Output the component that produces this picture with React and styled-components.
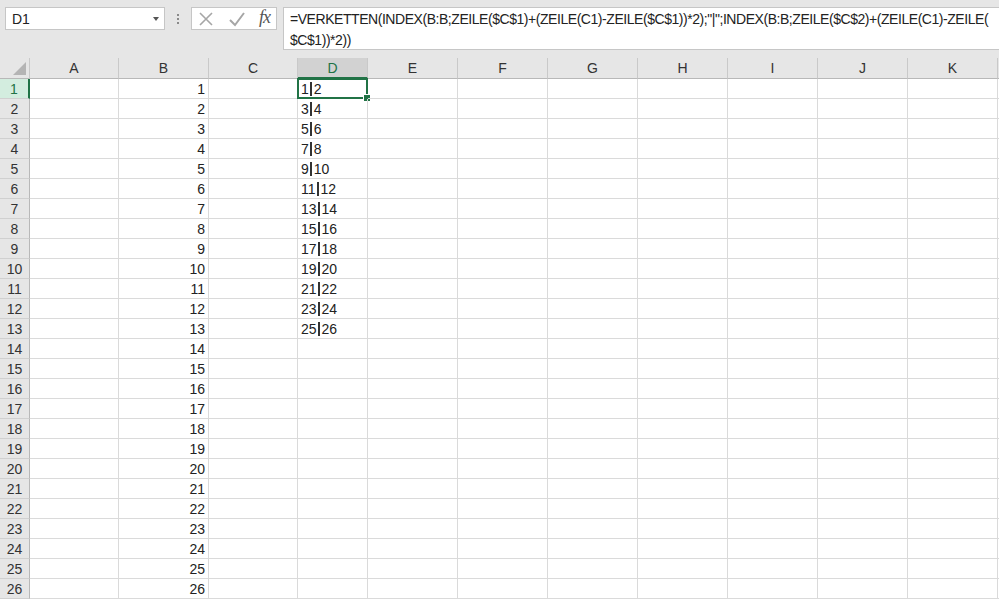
import styled, { createGlobalStyle, css } from "styled-components"

const GlobalStyle = createGlobalStyle`
  html, body {
    margin: 0;
    padding: 0;
    background: #e6e6e6;
    overflow: hidden;
  }
  * { box-sizing: border-box; }
`

const Page = styled.div`
  width: 999px;
  height: 601px;
  display: flex;
  flex-direction: column;
  font-family: "Liberation Sans", Arial, sans-serif;
  background: #e6e6e6;
  overflow: hidden;
`

const FormulaBar = styled.div`
  height: 58px;
  flex-shrink: 0;
  display: flex;
  align-items: flex-start;
  padding: 7px 0 0 5px;
`

const NameBox = styled.div`
  width: 160px;
  height: 23px;
  background: #fff;
  border: 1px solid #c6c6c6;
  display: flex;
  align-items: center;
  justify-content: space-between;
  padding: 0 5px 0 6px;
  font-size: 14px;
  color: #222;
`

const Caret = styled.span`
  width: 0;
  height: 0;
  border-left: 3px solid transparent;
  border-right: 3px solid transparent;
  border-top: 4px solid #555;
`

const Grip = styled.div`
  width: 26px;
  height: 23px;
  display: flex;
  flex-direction: column;
  align-items: center;
  justify-content: center;
  gap: 2px;
  span {
    width: 2px;
    height: 2px;
    background: #8a8a8a;
  }
`

const FxBox = styled.div`
  width: 86px;
  height: 23px;
  background: #fff;
  border: 1px solid #c6c6c6;
  display: flex;
  align-items: center;
  justify-content: space-between;
  padding: 0 6px 0 6px;
`

const Fx = styled.span`
  font-family: "Liberation Serif", "DejaVu Serif", serif;
  font-style: italic;
  font-size: 18px;
  color: #555;
  letter-spacing: -1px;
  margin-top: -3px;
`

const FormulaInput = styled.div`
  margin-left: 6px;
  flex: 1;
  height: 43px;
  background: #fff;
  border: 1px solid #c6c6c6;
  border-right: none;
  padding: 1px 0 0 6px;
  font-size: 14px;
  letter-spacing: -0.45px;
  line-height: 21px;
  color: #222;
  white-space: pre;
  overflow: hidden;
`

const Grid = styled.div`
  display: grid;
  grid-template-columns: 30px 89px 90px 89px 70px repeat(7, 90px) 1fr;
  grid-auto-rows: 20px;
  grid-template-rows: 21px;
  background: #fff;
  font-size: 14px;
  color: #222;
  flex: 1;
`

const ColHead = styled.div`
  background: ${p => (p.$active ? "#d2d2d2" : "#e6e6e6")};
  border-right: 1px solid #c9c9c9;
  border-bottom: ${p => (p.$active ? "2px solid #217346" : "1px solid #b8b8b8")};
  display: flex;
  align-items: center;
  justify-content: center;
  color: ${p => (p.$active ? "#217346" : "#333")};
  font-size: 14px;
`

const Corner = styled.div`
  background: #e6e6e6;
  border-right: 1px solid #c9c9c9;
  border-bottom: 1px solid #b8b8b8;
  position: relative;
  &::after {
    content: "";
    position: absolute;
    right: 3px;
    bottom: 3px;
    width: 0;
    height: 0;
    border-left: 13px solid transparent;
    border-bottom: 13px solid #b4b4b4;
  }
`

const RowHead = styled.div`
  background: ${p => (p.$active ? "#d3eddf" : "#e6e6e6")};
  border-right: ${p => (p.$active ? "2px solid #217346" : "1px solid #b8b8b8")};
  border-bottom: 1px solid #d0d0d0;
  display: flex;
  align-items: center;
  justify-content: center;
  color: ${p => (p.$active ? "#217346" : "#333")};
  font-size: 14px;
`

const Cell = styled.div`
  border-right: 1px solid #dadada;
  border-bottom: 1px solid #dadada;
  display: flex;
  align-items: center;
  padding: 0 3px;
  white-space: nowrap;
  justify-content: ${p => (p.$right ? "flex-end" : "flex-start")};
  position: relative;
  ${p =>
    p.$selected &&
    css`
      &::before {
        content: "";
        position: absolute;
        left: -1px;
        top: -1px;
        right: -1px;
        bottom: -1px;
        border: 2px solid #217346;
      }
      &::after {
        content: "";
        position: absolute;
        right: -4px;
        bottom: -4px;
        width: 6px;
        height: 6px;
        background: #217346;
        border: 1px solid #fff;
      }
    `}
`

const Pipe = styled.span`
  display: inline-block;
  width: 2px;
  height: 14px;
  background: #333;
  margin: 0 2px 0 1px;
`

const columns = ["A", "B", "C", "D", "E", "F", "G", "H", "I", "J", "K"]
const rows = Array.from({ length: 26 }, (_, i) => i + 1)

const formula =
  '=VERKETTEN(INDEX(B:B;ZEILE($C$1)+(ZEILE(C1)-ZEILE($C$1))*2);"|";INDEX(B:B;ZEILE($C$2)+(ZEILE(C1)-ZEILE(\n$C$1))*2))'

const CrossIcon = () => (
  <svg width="16" height="16" viewBox="0 0 16 16">
    <path d="M2 2 L14 14 M14 2 L2 14" stroke="#a6a6a6" strokeWidth="1.6" fill="none" />
  </svg>
)

const CheckIcon = () => (
  <svg width="18" height="16" viewBox="0 0 18 16">
    <path d="M2 9 L7 14 L16 2" stroke="#a6a6a6" strokeWidth="2" fill="none" />
  </svg>
)

const App = () => {
  return (
    <Page>
      <GlobalStyle />
      <FormulaBar>
        <NameBox>
          D1
          <Caret />
        </NameBox>
        <Grip>
          <span />
          <span />
          <span />
        </Grip>
        <FxBox>
          <CrossIcon />
          <CheckIcon />
          <Fx>fx</Fx>
        </FxBox>
        <FormulaInput>{formula}</FormulaInput>
      </FormulaBar>
      <Grid>
        <Corner />
        {columns.map(c => (
          <ColHead key={c} $active={c === "D"}>
            {c}
          </ColHead>
        ))}
        <ColHead />
        {rows.map(r => {
          const pair = r <= 13 ? [2 * r - 1, 2 * r] : null
          return [
            <RowHead key={`h${r}`} $active={r === 1}>
              {r}
            </RowHead>,
            ...columns.map(c => {
              let content = null
              if (c === "B") content = r
              if (c === "D" && pair)
                content = (
                  <>
                    {pair[0]}
                    <Pipe />
                    {pair[1]}
                  </>
                )
              return (
                <Cell key={`${c}${r}`} $right={c === "B"} $selected={c === "D" && r === 1}>
                  {content}
                </Cell>
              )
            }),
            <Cell key={`x${r}`} />,
          ]
        })}
      </Grid>
    </Page>
  )
}

export default App
